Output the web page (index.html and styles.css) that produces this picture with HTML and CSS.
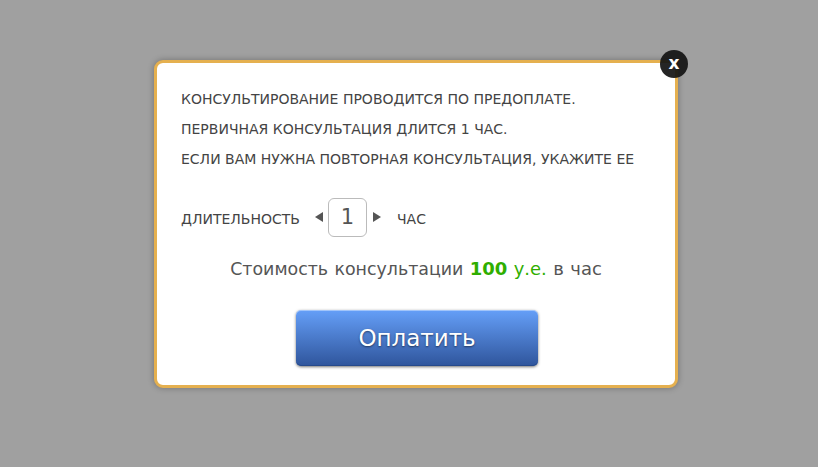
FILE: index.html
```html
<!DOCTYPE html>
<html lang="ru">
<head>
<meta charset="utf-8">
<title>Консультация</title>
<link rel="stylesheet" href="styles.css">
</head>
<body>
<div class="modal">
  <button class="close" type="button">x</button>
  <p class="line">КОНСУЛЬТИРОВАНИЕ ПРОВОДИТСЯ ПО ПРЕДОПЛАТЕ.</p>
  <p class="line">ПЕРВИЧНАЯ КОНСУЛЬТАЦИЯ ДЛИТСЯ 1 ЧАС.</p>
  <p class="line">ЕСЛИ ВАМ НУЖНА ПОВТОРНАЯ КОНСУЛЬТАЦИЯ, УКАЖИТЕ ЕЕ</p>
  <div class="duration">
    <span class="label">ДЛИТЕЛЬНОСТЬ</span>
    <span class="arrow arrow-left"></span>
    <span class="value">1</span>
    <span class="arrow arrow-right"></span>
    <span class="label unit">ЧАС</span>
  </div>
  <p class="price">Стоимость консультации <b class="sum">100</b> <span class="cur">у.е.</span> <span class="tail">в час</span></p>
  <button class="pay" type="button">Оплатить</button>
</div>
</body>
</html>
```
FILE: styles.css
```css
* { box-sizing: border-box; }
html, body { margin: 0; height: 100%; }
body {
  background: #a0a0a0;
  font-family: "DejaVu Sans", Verdana, sans-serif;
  color: #444;
  padding: 60px 0 0 154px;
  overflow: hidden;
}
.modal {
  position: relative;
  width: 524px;
  height: 328px;
  background: #fff;
  border: 3px solid #e5b04f;
  border-radius: 9px;
  box-shadow: 0 0 6px rgba(0,0,0,.3);
  padding: 27px 24px 0;
}
.close {
  position: absolute;
  top: -13px;
  right: -13px;
  width: 28px;
  height: 28px;
  padding: 0 0 2px;
  border: 0;
  border-radius: 50%;
  background: rgba(20,20,20,.93);
  color: #fff;
  font: bold 17px/1 "DejaVu Sans", sans-serif;
}
.line {
  margin: 0 0 12px;
  font-size: 14px;
  line-height: 18px;
  white-space: nowrap;
}
.duration {
  display: flex;
  align-items: center;
  height: 40px;
  margin-top: 29px;
  font-size: 14px;
}
.label { padding-top: 4px; }
.arrow {
  width: 0;
  height: 0;
  border-top: 5px solid transparent;
  border-bottom: 5px solid transparent;
}
.arrow-left { margin-left: 15px; border-right: 8px solid #555; }
.arrow-right { border-left: 8px solid #555; }
.value {
  width: 39px;
  height: 39px;
  margin: 0 6px 0 5px;
  border: 1px solid #bbb;
  border-radius: 6px;
  text-align: center;
  font-size: 21px;
  line-height: 37px;
  color: #555;
}
.unit { margin-left: 16px; }
.price {
  margin: 20px 0 0;
  text-align: center;
  font-size: 17.4px;
  line-height: 24px;
  word-spacing: .8px;
  color: #555;
}
.sum { color: #2fae00; font-size: 18px; }
.cur { color: #2fae00; font-size: 18px; }
.tail { font-size: 18px; }
.pay {
  display: block;
  width: 242px;
  height: 56px;
  margin: 29px 0 0 115px;
  border: 0;
  border-radius: 5px;
  background: linear-gradient(#659ff8, #2f559c);
  box-shadow: 0 1px 3px rgba(0,0,0,.55), inset 0 1px 0 rgba(255,255,255,.4), inset 0 -1px 0 #264a8c;
  color: #fff;
  font: 23px/1 "DejaVu Sans", sans-serif;
  text-shadow: 0 1px 2px rgba(0,0,0,.5);
}
```
